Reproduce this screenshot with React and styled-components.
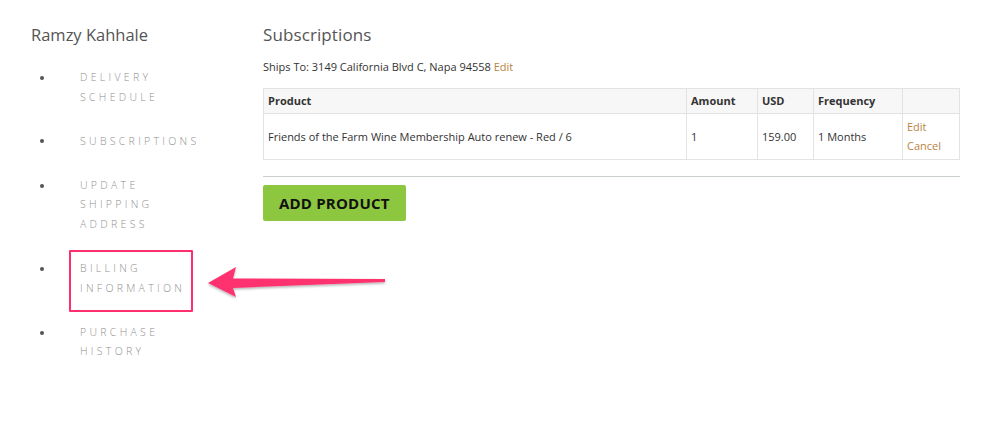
import React from "react";
import styled, { createGlobalStyle } from "styled-components";

const Global = createGlobalStyle`
  html, body { margin: 0; padding: 0; background: #fff; }
  body { font-family: "Open Sans", "Liberation Sans", sans-serif; color: #333; }
`;

const Page = styled.div`
  position: relative;
  width: 1000px;
  height: 425px;
  display: flex;
  box-sizing: border-box;
  padding: 22px 40px 0 31px;
`;

const Sidebar = styled.aside`
  width: 232px;
  flex: none;
`;

const UserName = styled.h2`
  margin: 0;
  font-size: 16.5px;
  font-weight: 400;
  line-height: 26px;
  color: #555;
`;

const NavList = styled.ul`
  list-style: none;
  margin: 20px 0 0;
  padding: 0;
`;

const NavItem = styled.li`
  display: flex;
  margin-bottom: 24.5px;
`;

const Bullet = styled.span`
  width: 49px;
  flex: none;
  display: flex;
  justify-content: flex-start;
  padding-left: 9px;
  box-sizing: border-box;
  height: 19.5px;
  align-items: center;
  &::before {
    content: "";
    width: 4px;
    height: 4px;
    border-radius: 50%;
    background: #555;
  }
`;

const NavLink = styled.span`
  position: relative;
  width: 130px;
  font-size: 10.5px;
  font-weight: 300;
  letter-spacing: 3.3px;
  line-height: 19.6px;
  color: #8f8f8f;
  text-transform: uppercase;
`;

const Highlight = styled.span`
  position: absolute;
  left: -11px;
  top: -9px;
  width: 124px;
  height: 62px;
  box-sizing: border-box;
  border: 2px solid #ff2f6e;
  border-radius: 1px;
`;

const Main = styled.main`
  flex: 1;
`;

const Title = styled.h1`
  margin: 0;
  font-size: 17px;
  font-weight: 400;
  line-height: 26px;
  color: #555;
  letter-spacing: 0.1px;
`;

const ShipsTo = styled.p`
  margin: 11px 0 0;
  font-size: 11px;
  line-height: 16px;
  color: #333;
`;

const Link = styled.a`
  color: #b9833f;
  text-decoration: none;
`;

const Table = styled.table`
  margin-top: 13px;
  width: 100%;
  border-collapse: collapse;
  table-layout: fixed;
  font-size: 11px;
  border: 1px solid #e3e3e3;
`;

const Th = styled.th`
  text-align: left;
  font-weight: 700;
  color: #333;
  background: #f7f7f7;
  border: 1px solid #e3e3e3;
  padding: 3px 4px;
  height: 25px;
  box-sizing: border-box;
  line-height: 18px;
`;

const Td = styled.td`
  border: 1px solid #e3e3e3;
  padding: 3px 4px 4px;
  line-height: 19px;
  color: #333;
  vertical-align: middle;
`;

const LinkStack = styled.div`
  display: flex;
  flex-direction: column;
`;

const Rule = styled.hr`
  margin: 16px 0 0;
  border: none;
  border-top: 1px solid #c9cfcf;
`;

const AddButton = styled.button`
  margin-top: 8px;
  height: 36px;
  padding: 0 16px;
  background: #8dc63f;
  border: none;
  border-radius: 2px;
  font-family: "Open Sans", "Liberation Sans", sans-serif;
  font-weight: 700;
  font-size: 15px;
  color: #111;
  letter-spacing: 0.2px;
`;

const ArrowSvg = styled.svg`
  position: absolute;
  left: 0;
  top: 0;
  pointer-events: none;
`;

const navItems = [
  "Delivery Schedule",
  "Subscriptions",
  "Update Shipping Address",
  "Billing Information",
  "Purchase History",
];

export default function App() {
  return (
    <>
      <Global />
      <Page>
        <Sidebar>
          <UserName>Ramzy Kahhale</UserName>
          <NavList>
            {navItems.map((label) => (
              <NavItem key={label}>
                <Bullet />
                <NavLink>
                  {label}
                  {label === "Billing Information" && <Highlight />}
                </NavLink>
              </NavItem>
            ))}
          </NavList>
        </Sidebar>
        <Main>
          <Title>Subscriptions</Title>
          <ShipsTo>
            Ships To: 3149 California Blvd C, Napa 94558 <Link href="#">Edit</Link>
          </ShipsTo>
          <Table>
            <colgroup>
              <col style={{ width: 423 }} />
              <col style={{ width: 71 }} />
              <col style={{ width: 56 }} />
              <col style={{ width: 89 }} />
              <col />
            </colgroup>
            <thead>
              <tr>
                <Th>Product</Th>
                <Th>Amount</Th>
                <Th>USD</Th>
                <Th>Frequency</Th>
                <Th />
              </tr>
            </thead>
            <tbody>
              <tr>
                <Td>Friends of the Farm Wine Membership Auto renew - Red / 6</Td>
                <Td>1</Td>
                <Td>159.00</Td>
                <Td>1 Months</Td>
                <Td>
                  <LinkStack>
                    <Link href="#">Edit</Link>
                    <Link href="#">Cancel</Link>
                  </LinkStack>
                </Td>
              </tr>
            </tbody>
          </Table>
          <Rule />
          <AddButton>ADD PRODUCT</AddButton>
        </Main>
        <ArrowSvg width="1000" height="425" viewBox="0 0 1000 425">
          <defs>
            <filter id="sh" x="-10%" y="-50%" width="120%" height="200%">
              <feDropShadow dx="0" dy="1.5" stdDeviation="1.2" floodColor="#000" floodOpacity="0.3" />
            </filter>
          </defs>
          <path
            d="M208 283 L236 267 L233 278.5 L385 279 L385 282 L233 288 L236 297 Z"
            fill="#ff3370"
            filter="url(#sh)"
          />
        </ArrowSvg>
      </Page>
    </>
  );
}
